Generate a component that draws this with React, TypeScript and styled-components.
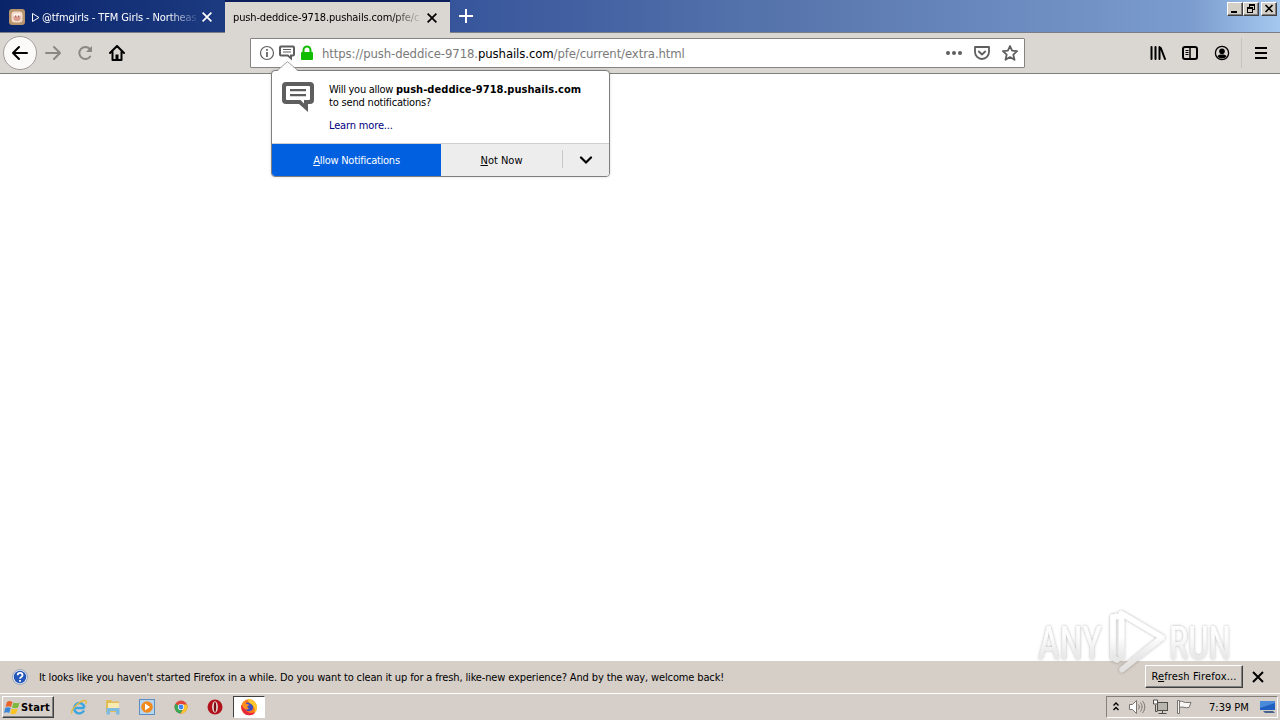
import React from "react";
import styled, { createGlobalStyle } from "styled-components";

const Global = createGlobalStyle`
  * { box-sizing: border-box; }
  html, body { margin: 0; padding: 0; overflow: hidden; }
  svg { display: block; flex: none; }
`;

const Screen = styled.div`
  position: relative;
  width: 1280px;
  height: 720px;
  display: flex;
  flex-direction: column;
  background: #fff;
  color: #000;
  font-family: "DejaVu Sans Condensed", "DejaVu Sans", sans-serif;
  font-stretch: condensed;
  font-size: 11px;
  overflow: hidden;
`;

const Label = styled.span<{ $size?: number; $spacing?: number; $color?: string; $bold?: boolean }>`
  white-space: pre;
  line-height: 13px;
  font-size: ${(p) => p.$size ?? 11}px;
  letter-spacing: ${(p) => p.$spacing ?? 0}px;
  color: ${(p) => p.$color ?? "inherit"};
  font-weight: ${(p) => (p.$bold ? 700 : 400)};
`;

const TabStrip = styled.header`
  height: 33px;
  flex: none;
  display: flex;
  background: linear-gradient(90deg, #0a246a 0%, #1c3a80 17%, #36549a 35%, #5876ad 62%, #7b9cce 93%, #a4c8ef 100%);
  border-bottom: 1px solid #7b7f8a;
`;

const Tab = styled.div<{ $active?: boolean }>`
  width: ${(p) => (p.$active ? 225 : 224)}px;
  height: ${(p) => (p.$active ? 33 : 32)}px;
  flex: none;
  display: flex;
  align-items: center;
  padding: ${(p) => (p.$active ? "0 11px 0 8px" : "2px 10px 0 9px")};
  background: ${(p) => (p.$active ? "#dad6d1" : "transparent")};
  border-top: ${(p) => (p.$active ? "2px solid #0a1f5c" : "0")};
  color: ${(p) => (p.$active ? "#000" : "#fff")};
  margin-left: ${(p) => (p.$active ? 1 : 0)}px;
`;

const TabTitle = styled.div<{ $width: number; $indent?: number }>`
  width: ${(p) => p.$width}px;
  margin-left: ${(p) => p.$indent ?? 0}px;
  margin-right: auto;
  display: flex;
  align-items: center;
  mask-image: linear-gradient(90deg, #000 calc(100% - 32px), transparent);
`;

const NewTab = styled.div`
  padding: 8px 0 0 8px;
`;

const WindowButtons = styled.div`
  display: flex;
  margin: 2px 3px 0 auto;
  height: 14px;
`;

const WindowButton = styled.div<{ $gap?: number }>`
  width: 16px;
  height: 14px;
  margin-left: ${(p) => p.$gap ?? 0}px;
  background: #d4d0c8;
  border: 1px solid;
  border-color: #fff #404040 #404040 #fff;
  box-shadow: inset -1px -1px 0 #808080;
`;

const Toolbar = styled.nav`
  height: 41px;
  flex: none;
  display: flex;
  align-items: center;
  padding: 0 0 0 3px;
  background: #dad6d1;
  border-bottom: 1px solid #7f7f7d;
`;

const BackButton = styled.div`
  width: 34px;
  height: 34px;
  border-radius: 50%;
  border: 1px solid #a19e99;
  background: #fbfaf9;
  display: grid;
  place-items: center;
`;

const NavIcons = styled.div`
  display: flex;
  gap: 16px;
  margin-left: 8px;
`;

const AddressBar = styled.div`
  width: 775px;
  height: 30px;
  margin-left: 125px;
  padding: 0 6px 0 8px;
  display: flex;
  align-items: center;
  background: #fff;
  border: 1px solid #868482;
  border-radius: 1px;
`;

const IdentityIcons = styled.div`
  display: flex;
  align-items: center;
  gap: 4px;
  margin-right: 7px;
`;

const PageActions = styled.div`
  display: flex;
  gap: 12px;
  margin-left: auto;
`;

const ToolbarEnd = styled.div`
  display: flex;
  align-items: center;
  gap: 16px;
  margin-left: 125px;
`;

const MenuButton = styled.div`
  height: 30px;
  display: flex;
  align-items: center;
  margin-left: 11px;
  padding-left: 11px;
  border-left: 1px solid #c6c2bd;
`;

const Page = styled.main`
  flex: 1;
  background: #fff;
`;

const Popup = styled.section`
  position: absolute;
  left: 271px;
  top: 70px;
  width: 339px;
  height: 107px;
  display: flex;
  flex-direction: column;
  background: #fff;
  border: 1px solid #7e7e7e;
  border-radius: 4px;
  box-shadow: 0 0 3px rgba(0, 0, 0, 0.15);
`;

const PopupArrow = styled.svg`
  position: absolute;
  left: 5px;
  top: -10px;
`;

const PopupBody = styled.div`
  flex: 1;
  display: flex;
  padding: 10px 0 0 10px;
`;

const PopupText = styled.div`
  display: flex;
  flex-direction: column;
  margin: 2px 0 0 15px;
`;

const LearnMore = styled.div`
  margin-top: 10px;
  display: flex;
`;

const PopupFooter = styled.div`
  height: 33px;
  display: flex;
  background: #ededed;
  border-top: 1px solid #cfcfcf;
  border-radius: 0 0 3px 3px;
  overflow: hidden;
`;

const PopupButton = styled.div<{ $width: number; $primary?: boolean }>`
  width: ${(p) => p.$width}px;
  margin-top: ${(p) => (p.$primary ? -1 : 0)}px;
  padding-top: ${(p) => (p.$primary ? 1 : 0)}px;
  display: flex;
  align-items: center;
  justify-content: center;
  background: ${(p) => (p.$primary ? "#0060df" : "transparent")};
  color: ${(p) => (p.$primary ? "#fff" : "#000")};
`;

const FooterDivider = styled.div`
  width: 1px;
  height: 18px;
  margin-top: 6px;
  background: #c8c8c8;
`;

const InfoBar = styled.aside`
  height: 32px;
  flex: none;
  display: flex;
  align-items: center;
  padding: 0 14px 0 12px;
  background: #d6cfc8;
`;

const InfoText = styled.div`
  margin-left: 11px;
  display: flex;
`;

const RefreshButton = styled.div`
  width: 98px;
  height: 23px;
  margin: 0 7px 1px auto;
  display: flex;
  align-items: center;
  justify-content: center;
  background: #d6cfc8;
  border: 1px solid;
  border-color: #fff #404040 #404040 #fff;
  box-shadow: inset -1px -1px 0 #808080;
`;

const Taskbar = styled.footer`
  height: 27px;
  flex: none;
  display: flex;
  align-items: center;
  padding: 0 2px 0;
  background: #d6cec8;
  border-top: 1px solid #fff;
`;

const StartButton = styled.div`
  width: 52px;
  height: 22px;
  display: flex;
  align-items: center;
  padding-left: 1px;
  border: 1px solid;
  border-color: #fff #404040 #404040 #fff;
  box-shadow: inset -1px -1px 0 #808080;
`;

const QuickLaunch = styled.div`
  display: flex;
  align-items: center;
  gap: 18px;
  margin-left: 17px;
`;

const ActiveTask = styled.div`
  width: 32px;
  height: 22px;
  margin-left: 10px;
  display: grid;
  place-items: center;
  background: #fff;
  border: 1px solid;
  border-color: #404040 #fff #fff #404040;
`;

const Tray = styled.div`
  width: 172px;
  height: 22px;
  margin-left: auto;
  display: flex;
  align-items: center;
  padding-left: 6px;
  border: 1px solid;
  border-color: #85807a #fff #fff #85807a;
`;

const TrayIcon = styled.svg<{ $gap: number }>`
  margin-left: ${(p) => p.$gap}px;
`;

const Clock = styled.div`
  margin: 0 11px 0 16px;
  display: flex;
`;

const Watermark = styled.svg`
  position: absolute;
  left: 1030px;
  top: 604px;
`;

const Close = ({ color = "#000", size = 16 }: { color?: string; size?: number }) => (
  <svg width={size} height={size} viewBox="0 0 16 16" stroke={color} strokeWidth="2" fill="none">
    <path d="M3 3l10 10M13 3l-10 10" />
  </svg>
);

const Bubble = ({ size }: { size: number }) => (
  <svg width={size} height={size} viewBox="0 0 32 32">
    <path
      fill="#5e5e5e"
      fillRule="evenodd"
      d="M4 1h24a4 4 0 0 1 4 4v14a4 4 0 0 1-4 4h-2v8l-9-8H4a4 4 0 0 1-4-4V5a4 4 0 0 1 4-4zm1 4a1 1 0 0 0-1 1v12a1 1 0 0 0 1 1h13.500l3.500 3.500V19h5a1 1 0 0 0 1-1V6a1 1 0 0 0-1-1zm3 3h16v2.200H8zm0 5h16v2.200H8z"
    />
  </svg>
);

const Firefox = () => (
  <svg width="18" height="18" viewBox="0 0 18 18">
    <circle cx="9" cy="9.3" r="8" fill="#ff7a1a" />
    <path d="M8 .8c5 .7 9 4 9 8.700a8 8 0 0 1-3 6c2-4 0-7-2-8.500-2-1.500-4.500-3-4-6.200z" fill="#ffc72c" />
    <path d="M1.200 7c0 6 3 10 8 10.300 3 0 5-1.300 6-3-5 2-9 0-10-4z" fill="#e8273c" />
    <path d="M5 6.500C6 4 9 4 10 5.500c3 1.500 4 4 2.500 6-2 2.500-6 2-7.500-.5z" fill="#3f4ec0" />
    <path d="M2 6l2-3L6 5.800l3.500 1-2.500 2 2 2-3 1-3-2z" fill="#ff8f1f" />
  </svg>
);

export default function App() {
  return (
    <Screen>
      <Global />
      <TabStrip>
        <Tab>
          <svg width="16" height="16" viewBox="0 0 16 16">
            <rect width="16" height="16" rx="3" fill="#b8946c" />
            <rect x="2.500" y="2.500" width="11" height="11" rx="3" fill="#f3d8cc" />
            <circle cx="8" cy="8.500" r="3.500" fill="#d99a8c" />
            <path d="M4.500 4.500h7v3h-7z" fill="#fff3e8" />
            <path d="M6 6.500h1.300v1.500H6zM9 6.500h1.300v1.500H9z" fill="#a0605c" />
          </svg>
          <TabTitle $width={170} $indent={6}>
            <svg width="11" height="11" viewBox="0 0 11 11"><path d="M1.500 1.500v8l6.500-4z" fill="none" stroke="#fff" /></svg>
            <Label $spacing={-0.12}>@tfmgirls - TFM Girls - Northeas</Label>
          </TabTitle>
          <Close color="#fff" size={14} />
        </Tab>
        <Tab $active>
          <TabTitle $width={190}>
            <Label $spacing={-0.15}>push-deddice-9718.pushails.com/pfe/c</Label>
          </TabTitle>
          <Close size={14} />
        </Tab>
        <NewTab>
          <svg width="16" height="16" viewBox="0 0 16 16" stroke="#fff" strokeWidth="2"><path d="M8 1v14M1 8h14" /></svg>
        </NewTab>
        <WindowButtons>
          <WindowButton><svg width="14" height="12"><path d="M3 8h6v2H3z" /></svg></WindowButton>
          <WindowButton><svg width="14" height="12"><path d="M5 1h6v6H9V6h1V3H6v1H5zM3 4h6v6H3zM4 6v3h4V6z" fillRule="evenodd" /></svg></WindowButton>
          <WindowButton $gap={2}><svg width="14" height="12" stroke="#000" strokeWidth="1.600"><path d="M3.500 2l7 7M10.500 2l-7 7" /></svg></WindowButton>
        </WindowButtons>
      </TabStrip>

      <Toolbar>
        <BackButton>
          <svg width="18" height="16" viewBox="0 0 18 16" fill="none" stroke="#000" strokeWidth="2" strokeLinecap="round" strokeLinejoin="round"><path d="M8 2L2 8l6 6M2 8h14" /></svg>
        </BackButton>
        <NavIcons>
          <svg width="16" height="16" viewBox="0 0 16 16" fill="none" stroke="#8a8784" strokeWidth="2" strokeLinecap="round" strokeLinejoin="round"><path d="M9 2l6 6-6 6M15 8H1" /></svg>
          <svg width="16" height="16" viewBox="0 0 16 16" fill="none" stroke="#8a8784" strokeWidth="2" strokeLinecap="round"><path d="M13.200 11.500A6 6 0 1 1 12.800 4" /><path d="M15 1v6H9z" fill="#8a8784" stroke="none" /></svg>
          <svg width="16" height="16" viewBox="0 0 16 16" fill="none" stroke="#000" strokeWidth="2" strokeLinejoin="round" strokeLinecap="round"><path d="M1 8l7-7 7 7M3.500 7v8h9V7" /><path d="M6.500 9.500h3V15h-3z" fill="#000" stroke="none" /></svg>
        </NavIcons>
        <AddressBar>
          <IdentityIcons>
            <svg width="16" height="16" viewBox="0 0 16 16" fill="none" stroke="#5e5e5e"><circle cx="8" cy="8" r="6.500" strokeWidth="1.200" /><path d="M8 7v5M8 4v1.800" strokeWidth="1.700" /></svg>
            <Bubble size={16} />
            <svg width="16" height="16" viewBox="0 0 16 16"><path d="M4.500 8V5a3.500 3.500 0 0 1 7 0v3" fill="none" stroke="#12bc00" strokeWidth="2" /><rect x="2" y="7" width="12" height="8" rx="1" fill="#12bc00" /></svg>
          </IdentityIcons>
          <Label $size={13} $spacing={-0.1} $color="#7a7a7a">https://push-deddice-9718.<Label $size={13} $spacing={-0.1} $color="#000">pushails.com</Label>/pfe/current/extra.html</Label>
          <PageActions>
            <svg width="16" height="16" viewBox="0 0 16 16" fill="#5e5e5e"><circle cx="2" cy="8" r="2" /><circle cx="8" cy="8" r="2" /><circle cx="14" cy="8" r="2" /></svg>
            <svg width="16" height="16" viewBox="0 0 16 16" fill="none" stroke="#5e5e5e" strokeWidth="1.800" strokeLinecap="round" strokeLinejoin="round"><path d="M1 2h14v5a7 7 0 0 1-14 0z" /><path d="M4.800 6.500L8 9.500l3.200-3" /></svg>
            <svg width="16" height="16" viewBox="0 0 16 16" fill="none" stroke="#5e5e5e" strokeWidth="1.800" strokeLinejoin="round"><path d="M8 1l2.100 4.700 5 .5-3.800 3.400 1.200 5.200L8 12.100l-4.500 2.700 1.200-5.200L.9 6.200l5-.5z" /></svg>
          </PageActions>
        </AddressBar>
        <ToolbarEnd>
          <svg width="16" height="16" viewBox="0 0 16 16" fill="none" stroke="#000" strokeWidth="2" strokeLinecap="round"><path d="M1.500 2v12M5.500 2v12M9.500 2v12M10.800 3l4.200 11" /></svg>
          <svg width="16" height="16" viewBox="0 0 16 16" fill="none" stroke="#000"><rect x="1" y="2" width="14" height="12" rx="2" strokeWidth="2" /><path d="M8 2v12" strokeWidth="1.500" /><path d="M3.500 5.500h3M3.500 7.500h3M3.500 9.500h3" /></svg>
          <svg width="16" height="16" viewBox="0 0 16 16"><circle cx="8" cy="8" r="6.600" fill="none" stroke="#000" strokeWidth="1.300" /><circle cx="8" cy="6.300" r="2.800" /><path d="M3.500 11.500C4.500 9.500 6 9.500 8 9.500s3.500 0 4.500 2A6 6 0 0 1 8 13.500a6 6 0 0 1-4.500-2z" /></svg>
        </ToolbarEnd>
        <MenuButton>
          <svg width="16" height="16" viewBox="0 0 16 16" stroke="#000" strokeWidth="2"><path d="M2 3h12M2 8h12M2 13h12" /></svg>
        </MenuButton>
      </Toolbar>

      <Page />

      <InfoBar>
        <svg width="16" height="16" viewBox="0 0 16 16"><circle cx="8" cy="8" r="7.500" fill="#e8ecf5" stroke="#8a96b4" strokeWidth=".8" /><circle cx="8" cy="8" r="6.200" fill="#2455b8" /><path d="M5.700 6.200c0-3 4.800-3 4.800 0C10.500 8 8 7.800 8 9.800M8 11v1.800" fill="none" stroke="#fff" strokeWidth="1.800" /></svg>
        <InfoText><Label $spacing={-0.138}>It looks like you haven't started Firefox in a while. Do you want to clean it up for a fresh, like-new experience? And by the way, welcome back!</Label></InfoText>
        <RefreshButton><Label $spacing={0.15}>R<u>e</u>fresh Firefox...</Label></RefreshButton>
        <Close size={16} />
      </InfoBar>

      <Taskbar>
        <StartButton>
          <svg width="17" height="17" viewBox="0 0 17 17"><path d="M3 3c2-1.500 3.500-1 5.500 0L7 8C5 7 3.500 7 1.500 8z" fill="#e8622a" /><path d="M9.500 3.500c2 1 4 1 6 0l-1.500 5c-2 1-4 1-6 0z" fill="#7db83a" /><path d="M1.200 9c2-1.200 3.800-1 5.500 0l-1.500 5C3.500 13 2 13 0 14z" fill="#3a86d8" /><path d="M7.700 9.500c2 1 4 1 6 0l-1.500 5c-2 1-4 1-6 0z" fill="#f7c325" /></svg>
          <Label $bold $spacing={0.15}>Start</Label>
        </StartButton>
        <QuickLaunch>
          <svg width="16" height="16" viewBox="0 0 16 16" fill="none"><path d="M13.500 9H4.500M13 11.500a5.200 5.200 0 1 1 .5-3" stroke="#3aa5e0" strokeWidth="2.400" /><path d="M1 14.500C-1 11 9 1 14.500 1.500c1 .3 1 2 .3 3.500" stroke="#e5b93a" strokeWidth="1.300" /></svg>
          <svg width="16" height="16" viewBox="0 0 16 16"><path d="M1 1h5l1 1.500h7V13H1z" fill="#e0bd55" /><path d="M3 4h11v5H3z" fill="#f8eab0" /><path d="M1.500 15.500V9h13v6.500H11V12H5v3.500z" fill="#7dbbe2" /></svg>
          <svg width="16" height="16" viewBox="0 0 16 16"><rect x=".5" y=".5" width="15" height="15" fill="#b9d4ee" stroke="#5b8fc2" /><circle cx="8" cy="8" r="5.800" fill="#f08a1c" /><path d="M6 4.500v7l5-3.500z" fill="#fff" /></svg>
          <svg width="16" height="16" viewBox="0 0 16 16"><circle cx="8" cy="8" r="6.500" fill="#e0463a" /><path d="M2.400 4.800A6.500 6.500 0 0 0 7.500 14.500l3-5L8 8z" fill="#3aa757" /><path d="M14 5.500H8l2.800 4-3.300 5A6.500 6.500 0 0 0 14 5.500z" fill="#f8c52c" /><circle cx="8" cy="8" r="3.100" fill="#fff" /><circle cx="8" cy="8" r="2.400" fill="#4284f0" /></svg>
          <svg width="16" height="16" viewBox="0 0 16 16"><circle cx="8" cy="8" r="7.500" fill="#b3121c" /><ellipse cx="8" cy="8" rx="2.900" ry="5.800" fill="#e6dcd8" /><ellipse cx="8" cy="8" rx="1.200" ry="5" fill="#7c0c14" /></svg>
        </QuickLaunch>
        <ActiveTask><Firefox /></ActiveTask>
        <Tray>
          <svg width="6" height="12" viewBox="0 0 6 12" fill="none" stroke="#000" strokeWidth="1.400"><path d="M.5 4.500L3 2l2.500 2.500M.5 9L3 6.500 5.500 9" /></svg>
          <TrayIcon $gap={9} width="18" height="16" viewBox="0 0 18 16" fill="none" stroke="#77736e"><path d="M1.500 5.500h3l4-4v13l-4-4h-3z" fill="#fff" /><path d="M10.500 5.500c1 1.500 1 3.500 0 5M12.500 3.500c2 2.500 2 6.500 0 9M14.500 2c3 3.500 3 8.500 0 12" /></TrayIcon>
          <TrayIcon $gap={6} width="17" height="16" viewBox="0 0 17 16" fill="none" stroke="#4f4c49"><rect x="5.500" y="3.500" width="10" height="8" fill="#b8b4ae" /><path d="M6.500 14.500h8M10.500 12v2M3.500 6v6.500h2" /><path d="M1.500 1v4h4V1z" fill="#fff" /></TrayIcon>
          <TrayIcon $gap={7} width="17" height="16" viewBox="0 0 17 16" fill="#f8f7f5" stroke="#77736e"><path d="M1.500 1.500h2v13h-2zM3.500 2.500c3-1 4 1 6 1h5.500l-2 5c-4 1-6-1.500-9.500 0z" /></TrayIcon>
          <Clock><Label>7:39 PM</Label></Clock>
          <svg width="16" height="14" viewBox="0 0 16 14"><path d="M0 1h15v9H0z" fill="#1e5fc0" /><path d="M0 1h15v2L0 8z" fill="#4a8ada" /><path d="M3 11h10l2 2H5z" fill="#45618d" /></svg>
        </Tray>
      </Taskbar>

      <Popup>
        <PopupArrow width="22" height="11" viewBox="0 0 22 11"><path d="M0 10.500L10.500 .7 21 10.500z" fill="#fff" /><path d="M0 9.500L10.500 .7 21 9.500" fill="none" stroke="#a2a2a2" /></PopupArrow>
        <PopupBody>
          <Bubble size={32} />
          <PopupText>
            <Label $spacing={-0.28}>Will you allow <Label $bold $spacing={0.05}>push-deddice-9718.pushails.com</Label></Label>
            <Label $spacing={-0.18}>to send notifications?</Label>
            <LearnMore><Label $color="#000080" $spacing={-0.15}>Learn more...</Label></LearnMore>
          </PopupText>
        </PopupBody>
        <PopupFooter>
          <PopupButton $width={169} $primary><Label $spacing={-0.26}><u>A</u>llow Notifications</Label></PopupButton>
          <PopupButton $width={121}><Label><u>N</u>ot Now</Label></PopupButton>
          <FooterDivider />
          <PopupButton $width={46}><svg width="14" height="9" viewBox="0 0 14 9" fill="none" stroke="#000" strokeWidth="2.200" strokeLinecap="round"><path d="M2 1.500l5 5 5-5" /></svg></PopupButton>
        </PopupFooter>
      </Popup>

      <Watermark width="210" height="74" viewBox="0 0 210 74">
        <defs>
          <filter id="soft" x="-10%" y="-10%" width="120%" height="120%">
            <feDropShadow dx="0" dy="0" stdDeviation="1.800" floodColor="#000" floodOpacity=".36" />
          </filter>
          <linearGradient id="fade" gradientUnits="userSpaceOnUse" x1="0" y1="10" x2="0" y2="66">
            <stop offset=".4" stopColor="#fff" />
            <stop offset=".75" stopColor="#e9e9e9" />
            <stop offset="1" stopColor="#e4e2e0" />
          </linearGradient>
        </defs>
        <g filter="url(#soft)" fill="url(#fade)" fillOpacity=".92" fontFamily="Roboto, sans-serif" fontSize="46">
          <text x="8" y="55" textLength="64" lengthAdjust="spacingAndGlyphs">ANY</text>
          <text x="139" y="55" textLength="62" lengthAdjust="spacingAndGlyphs">RUN</text>
          <path d="M87 12.500L83 13v41l4 2M91.500 54V9.500L132 33.500 92 65.500" fill="none" stroke="url(#fade)" strokeWidth="5.500" strokeLinecap="round" strokeLinejoin="round" />
        </g>
      </Watermark>
    </Screen>
  );
}
